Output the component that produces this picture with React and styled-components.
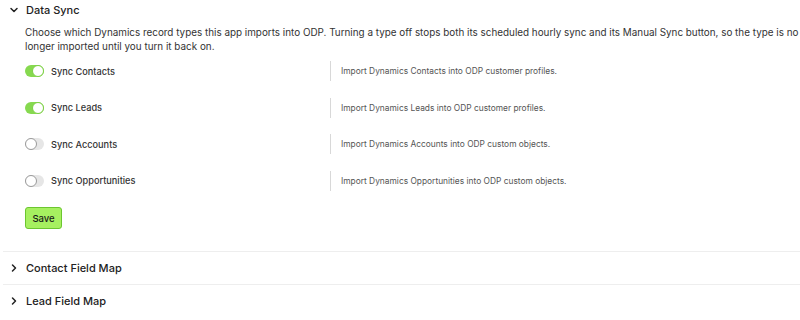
import React, { useState } from 'react';
import styled, { createGlobalStyle } from 'styled-components';

const GlobalStyle = createGlobalStyle`
  body {
    margin: 0;
    background: #ffffff;
    font-family: Inter, 'Liberation Sans', sans-serif;
    color: #222;
  }
`;

const syncTypes = [
  { key: 'contacts', label: 'Sync Contacts', help: 'Import Dynamics Contacts into ODP customer profiles.', on: true },
  { key: 'leads', label: 'Sync Leads', help: 'Import Dynamics Leads into ODP customer profiles.', on: true },
  { key: 'accounts', label: 'Sync Accounts', help: 'Import Dynamics Accounts into ODP custom objects.', on: false },
  { key: 'opps', label: 'Sync Opportunities', help: 'Import Dynamics Opportunities into ODP custom objects.', on: false },
];

const Chevron = ({ open }) => (
  <ChevronIcon viewBox="0 0 10 10" $open={open}>
    <path d="M3.5 2 L6.5 5 L3.5 8" fill="none" stroke="#222" strokeWidth="1.5" strokeLinecap="round" strokeLinejoin="round" />
  </ChevronIcon>
);

const App = () => {
  const [state, setState] = useState(
    Object.fromEntries(syncTypes.map((t) => [t.key, t.on]))
  );

  return (
    <Page>
      <GlobalStyle />
      <Section>
        <Header>
          <Chevron open />
          Data Sync
        </Header>
        <Body>
          <Intro>
            Choose which Dynamics record types this app imports into ODP. Turning a type off stops both its scheduled hourly sync and its Manual Sync button, so the type is no longer imported until you turn it back on.
          </Intro>
          <Rows>
            {syncTypes.map((t) => (
              <Row key={t.key}>
                <ToggleLabel>
                  <Switch
                    $on={state[t.key]}
                    onClick={() => setState((s) => ({ ...s, [t.key]: !s[t.key] }))}
                  >
                    <Knob $on={state[t.key]} />
                  </Switch>
                  {t.label}
                </ToggleLabel>
                <Help>{t.help}</Help>
              </Row>
            ))}
          </Rows>
          <SaveButton type="button">Save</SaveButton>
        </Body>
      </Section>
      <Section $bordered>
        <Header $collapsed>
          <Chevron />
          Contact Field Map
        </Header>
      </Section>
      <Section $bordered>
        <Header $collapsed>
          <Chevron />
          Lead Field Map
        </Header>
      </Section>
    </Page>
  );
};

export default App;

const Page = styled.div`
  padding: 0 0 0 3px;
`;

const Section = styled.div`
  border-top: ${({ $bordered }) => ($bordered ? '1px solid #eeeeee' : 'none')};
`;

const Header = styled.div`
  display: flex;
  align-items: center;
  gap: 7px;
  height: ${({ $collapsed }) => ($collapsed ? '32px' : '17px')};
  padding: ${({ $collapsed }) => ($collapsed ? '0' : '1px')} 0 0 6px;
  font-size: 11px;
  font-weight: 500;
  color: #222;
`;

const ChevronIcon = styled.svg`
  width: 10px;
  height: 10px;
  transform: ${({ $open }) => ($open ? 'rotate(90deg)' : 'none')};
`;

const Body = styled.div`
  padding: 7px 0 22px 22px;
`;

const Intro = styled.p`
  margin: 0;
  font-size: 9.9px;
  line-height: 14px;
  color: #333;
`;

const Rows = styled.div`
  display: flex;
  flex-direction: column;
`;

const Row = styled.div`
  display: grid;
  grid-template-columns: 305px 1fr;
  align-items: center;
  height: 36.5px;
`;

const ToggleLabel = styled.label`
  display: flex;
  align-items: center;
  gap: 7px;
  font-size: 9.2px;
  font-weight: 500;
  color: #333;
`;

const Switch = styled.span`
  position: relative;
  display: inline-block;
  width: 19px;
  height: 12px;
  border-radius: 6px;
  background: ${({ $on }) => ($on ? '#86d94f' : '#e6e6e6')};
  cursor: pointer;
`;

const Knob = styled.span`
  position: absolute;
  box-sizing: border-box;
  top: 0;
  left: ${({ $on }) => ($on ? '7px' : '0')};
  width: 12px;
  height: 12px;
  border-radius: 50%;
  background: #fff;
  border: 1.5px solid ${({ $on }) => ($on ? '#7ccf45' : '#9a9a9a')};
`;

const Help = styled.div`
  border-left: 1px solid #d8d8d8;
  padding: 5px 0 5px 10px;
  font-size: 8.4px;
  color: #555;
`;

const SaveButton = styled.button`
  display: flex;
  align-items: center;
  justify-content: center;
  margin-top: 8px;
  width: 37px;
  height: 22px;
  padding: 0;
  border: 1px solid #6cc630;
  border-radius: 3px;
  background: #a6f060;
  font-family: inherit;
  font-size: 9.5px;
  font-weight: 500;
  color: #1a1a1a;
`;
